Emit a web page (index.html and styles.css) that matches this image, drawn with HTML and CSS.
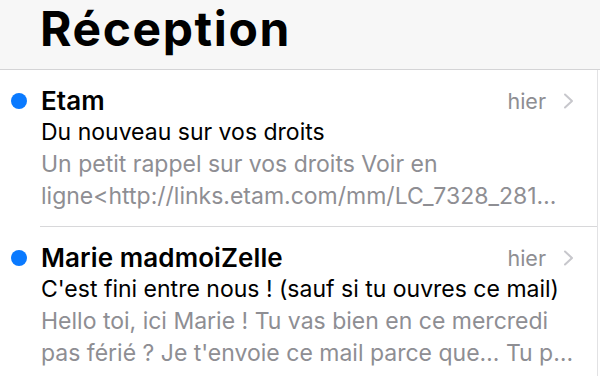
FILE: index.html
```html
<!DOCTYPE html>
<html lang="fr">
<head>
<meta charset="utf-8">
<title>Réception</title>
<link rel="stylesheet" href="styles.css">
</head>
<body>
<header class="header">
  <h1 class="title">Réception</h1>
</header>
<ul class="list">
  <li class="item">
    <div class="dot-col"><span class="dot"></span></div>
    <div class="body">
      <div class="top">
        <span class="sender">Etam</span>
        <span class="meta"><span class="date">hier</span>
          <svg class="chev" width="12" height="16" viewBox="0 0 12 16"><path d="M2 1.5 L9 8 L2 14.5" fill="none" stroke="#c7c7cc" stroke-width="2" stroke-linecap="round" stroke-linejoin="round"/></svg>
        </span>
      </div>
      <div class="subject">Du nouveau sur vos droits</div>
      <div class="preview">Un petit rappel sur vos droits Voir en</div>
      <div class="preview">ligne&lt;http://links.etam.com/mm/LC_7328_281…</div>
    </div>
  </li>
  <li class="item">
    <div class="dot-col"><span class="dot"></span></div>
    <div class="body">
      <div class="top">
        <span class="sender">Marie madmoiZelle</span>
        <span class="meta"><span class="date">hier</span>
          <svg class="chev" width="12" height="16" viewBox="0 0 12 16"><path d="M2 1.5 L9 8 L2 14.5" fill="none" stroke="#c7c7cc" stroke-width="2" stroke-linecap="round" stroke-linejoin="round"/></svg>
        </span>
      </div>
      <div class="subject">C'est fini entre nous ! (sauf si tu ouvres ce mail)</div>
      <div class="preview">Hello toi, ici Marie ! Tu vas bien en ce mercredi</div>
      <div class="preview">pas férié ? Je t'envoie ce mail parce que… Tu p…</div>
    </div>
  </li>
</ul>
</body>
</html>
```
FILE: styles.css
```css
* { box-sizing: border-box; }
html, body {
  margin: 0;
  padding: 0;
  background: #ffffff;
  font-family: Inter, "Noto Sans", "Liberation Sans", sans-serif;
  overflow: hidden;
}
.header {
  height: 70px;
  background: #f7f7f7;
  border-bottom: 1px solid #d4d4d6;
  padding: 5px 0 0 40px;
}
.title {
  margin: 0;
  font-size: 48px;
  font-weight: 700;
  line-height: 48px;
  letter-spacing: 1.6px;
  color: #000;
}
.list {
  list-style: none;
  margin: 0 2px 0 0;
  padding: 0;
  border-right: 1px solid #e2e2e4;
  height: 306px;
}
.item {
  display: flex;
}
.dot-col {
  width: 40px;
  flex: none;
  padding-top: 15px;
  padding-left: 11px;
  height: 47px;
  display: flex;
  align-items: center;
}
.dot {
  width: 16px;
  height: 16px;
  border-radius: 50%;
  background: #0a7aff;
}
.body {
  flex: 1;
  min-width: 0;
  padding: 15px 22px 14px 1px;
  border-bottom: 1px solid #d8d8da;
}
.item:last-child .body { border-bottom: none; }
.top {
  display: flex;
  justify-content: space-between;
  align-items: center;
  height: 32px;
}
.sender {
  font-size: 26px;
  font-weight: 600;
  letter-spacing: 0.1px;
  color: #000;
  line-height: 32px;
}
.meta {
  display: flex;
  align-items: center;
  gap: 17px;
}
.date {
  font-size: 21.5px;
  color: #8e8e93;
  line-height: 32px;
}
.chev { display: block; }
.subject {
  font-size: 23px;
  color: #000;
  line-height: 31px;
  white-space: nowrap;
  overflow: hidden;
}
.preview {
  font-size: 23px;
  color: #8e8e93;
  line-height: 32px;
  white-space: nowrap;
  overflow: hidden;
}
```
